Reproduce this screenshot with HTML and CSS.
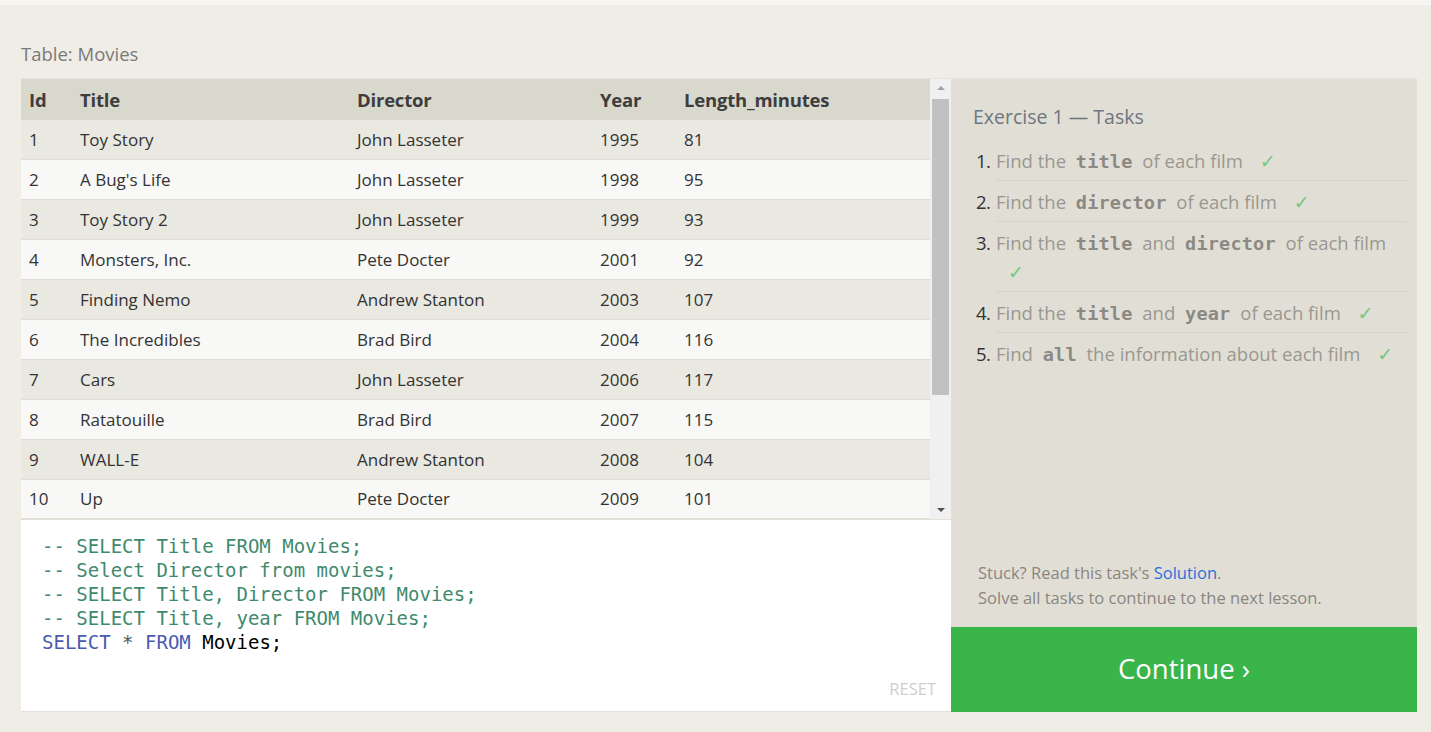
FILE: index.html
```html
<!DOCTYPE html>
<html lang="en">
<head>
<meta charset="utf-8">
<title>SQL Lesson — Movies</title>
<link rel="stylesheet" href="styles.css">
</head>
<body>
<div class="topbar"></div>
<div class="page">
  <div class="caption">Table: Movies</div>
  <div class="workspace">
    <div class="left">
      <div class="results">
        <div class="table-viewport">
          <table class="data">
            <colgroup>
              <col class="c-id"><col class="c-title"><col class="c-dir"><col class="c-year"><col class="c-len">
            </colgroup>
            <thead>
              <tr><th>Id</th><th>Title</th><th>Director</th><th>Year</th><th>Length_minutes</th></tr>
            </thead>
            <tbody>
              <tr><td>1</td><td>Toy Story</td><td>John Lasseter</td><td>1995</td><td>81</td></tr>
              <tr><td>2</td><td>A Bug's Life</td><td>John Lasseter</td><td>1998</td><td>95</td></tr>
              <tr><td>3</td><td>Toy Story 2</td><td>John Lasseter</td><td>1999</td><td>93</td></tr>
              <tr><td>4</td><td>Monsters, Inc.</td><td>Pete Docter</td><td>2001</td><td>92</td></tr>
              <tr><td>5</td><td>Finding Nemo</td><td>Andrew Stanton</td><td>2003</td><td>107</td></tr>
              <tr><td>6</td><td>The Incredibles</td><td>Brad Bird</td><td>2004</td><td>116</td></tr>
              <tr><td>7</td><td>Cars</td><td>John Lasseter</td><td>2006</td><td>117</td></tr>
              <tr><td>8</td><td>Ratatouille</td><td>Brad Bird</td><td>2007</td><td>115</td></tr>
              <tr><td>9</td><td>WALL-E</td><td>Andrew Stanton</td><td>2008</td><td>104</td></tr>
              <tr><td>10</td><td>Up</td><td>Pete Docter</td><td>2009</td><td>101</td></tr>
              <tr><td>11</td><td>Toy Story 3</td><td>Lee Unkrich</td><td>2010</td><td>103</td></tr>
              <tr><td>12</td><td>Cars 2</td><td>John Lasseter</td><td>2011</td><td>120</td></tr>
              <tr><td>13</td><td>Brave</td><td>Brenda Chapman</td><td>2012</td><td>102</td></tr>
              <tr><td>14</td><td>Monsters University</td><td>Dan Scanlon</td><td>2013</td><td>110</td></tr>
            </tbody>
          </table>
        </div>
        <div class="scrollbar">
          <div class="sb-btn"><span class="arrow-up"></span></div>
          <div class="sb-track"><div class="sb-thumb"></div></div>
          <div class="sb-btn sb-btn-bottom"><span class="arrow-down"></span></div>
        </div>
      </div>
      <div class="editor">
        <div class="code">
          <div class="line"><span class="cm">-- SELECT Title FROM Movies;</span></div>
          <div class="line"><span class="cm">-- Select Director from movies;</span></div>
          <div class="line"><span class="cm">-- SELECT Title, Director FROM Movies;</span></div>
          <div class="line"><span class="cm">-- SELECT Title, year FROM Movies;</span></div>
          <div class="line"><span class="kw">SELECT</span> <span class="op">*</span> <span class="kw">FROM</span> Movies;</div>
        </div>
        <div class="reset-row"><span class="reset">RESET</span></div>
      </div>
    </div>
    <div class="right">
      <div class="tasks">
        <h3 class="tasks-title">Exercise 1 — Tasks</h3>
        <ol class="task-list">
          <li><span class="num">1.</span><span class="task">Find the <code>title</code> of each film <span class="check">✓</span></span></li>
          <li><span class="num">2.</span><span class="task">Find the <code>director</code> of each film <span class="check">✓</span></span></li>
          <li><span class="num">3.</span><span class="task">Find the <code>title</code> and <code>director</code> of each film <span class="check">✓</span></span></li>
          <li><span class="num">4.</span><span class="task">Find the <code>title</code> and <code>year</code> of each film <span class="check">✓</span></span></li>
          <li class="last"><span class="num">5.</span><span class="task">Find <code>all</code> the information about each film <span class="check">✓</span></span></li>
        </ol>
      </div>
      <div class="help">
        <p>Stuck? Read this task's <a href="#">Solution</a>.</p>
        <p>Solve all tasks to continue to the next lesson.</p>
      </div>
      <a class="continue" href="#">Continue ›</a>
    </div>
  </div>
</div>
</body>
</html>
```
FILE: styles.css
```css
* { box-sizing: border-box; }

html, body {
  margin: 0;
  padding: 0;
}

body {
  background: #efede6;
  font-family: "Open Sans", "Noto Sans", sans-serif;
  color: #333;
  height: 732px;
  overflow: hidden;
}

.topbar {
  height: 5px;
  background: #f6f5f1;
}

.page {
  padding: 0 14px 0 21px;
}

.caption {
  padding-top: 37px;
  height: 73px;
  font-size: 18.5px;
  line-height: 24px;
  color: #7a7a7a;
}

.workspace {
  display: flex;
  height: 634px;
  border-top: 1px solid #e6e4dc;
}

/* ---------- left column ---------- */
.left {
  width: 930px;
  display: flex;
  flex-direction: column;
  border-bottom: 1px solid #e2e0d7;
}

.results {
  display: flex;
  height: 440px;
}

.table-viewport {
  width: 909px;
  overflow: hidden;
}

.data {
  width: 909px;
  border-collapse: collapse;
  table-layout: fixed;
  font-size: 17px;
}

.c-id { width: 51px; }
.c-title { width: 277px; }
.c-dir { width: 243px; }
.c-year { width: 84px; }
.c-len { width: auto; }

.data th {
  background: #d9d8cd;
  text-align: left;
  font-weight: 700;
  font-size: 18.5px;
  color: #3d3d3d;
  height: 41px;
  padding: 0 8px;
  letter-spacing: -0.2px;
}

.data td {
  height: 39.9px;
  padding: 0 8px;
  color: #333;
  border-bottom: 1px solid #dedcd5;
  white-space: nowrap;
}

.data tbody tr:nth-child(odd) td { background: #e9e8e1; }
.data tbody tr:nth-child(even) td { background: #f8f8f7; }

.scrollbar {
  width: 21px;
  background: #f0f0f0;
  display: flex;
  flex-direction: column;
}

.sb-btn {
  height: 17px;
  display: flex;
  align-items: center;
  justify-content: center;
}

.sb-btn-bottom { height: 19px; }

.arrow-up {
  width: 0;
  height: 0;
  border-left: 4px solid transparent;
  border-right: 4px solid transparent;
  border-bottom: 4px solid #a3a3a3;
}

.arrow-down {
  width: 0;
  height: 0;
  border-left: 4px solid transparent;
  border-right: 4px solid transparent;
  border-top: 4px solid #505050;
}

.sb-track {
  flex: 1;
  padding: 3px 2px 0 2px;
}

.sb-thumb {
  height: 296px;
  background: #c1c1c1;
}

.editor {
  flex: 1;
  background: #fff;
  display: flex;
  flex-direction: column;
  border-top: 1px solid #e3e1d8;
}

.code {
  padding: 14px 0 0 21px;
  font-family: "DejaVu Sans Mono", "Liberation Mono", monospace;
  font-size: 19px;
  line-height: 24px;
  color: #000;
  flex: 1;
}

.line {
  height: 24px;
  white-space: pre;
}

.cm { color: #3f8a6c; }
.kw { color: #4a5bb0; }
.op { color: #555; }

.reset-row {
  display: flex;
  justify-content: flex-end;
  padding: 0 15px 11px 0;
}

.reset {
  font-size: 16.5px;
  line-height: 22px;
  color: #cfcfcf;
}

/* ---------- right column ---------- */
.right {
  width: 466px;
  background: #e1dfd5;
  display: flex;
  flex-direction: column;
}

.tasks {
  flex: 1;
  padding: 25px 10px 0 22px;
}

.tasks-title {
  margin: 0 0 10px 0;
  font-size: 19.5px;
  font-weight: 400;
  line-height: 26px;
  color: #6e7682;
}

.task-list {
  list-style: none;
  margin: 0;
  padding: 0;
}

.task-list li {
  display: flex;
  font-size: 18.5px;
  line-height: 29px;
}

.num {
  width: 23px;
  padding: 6px 0 5px 3px;
  color: #333;
  flex: none;
  letter-spacing: -0.5px;
}

.task {
  flex: 1;
  padding: 6px 0 5px 0;
  color: #9a9791;
  border-bottom: 1px solid #d6d4c9;
}

.task-list li.last .task { border-bottom: none; }

.task code {
  font-family: "DejaVu Sans Mono", "Liberation Mono", monospace;
  font-weight: 700;
  font-size: 18.5px;
  line-height: 1;
  color: #8b8984;
  padding: 0 5px;
  letter-spacing: 0.2px;
}

.check {
  color: #74c77f;
  margin-left: 12px;
  font-family: "DejaVu Sans", sans-serif;
  font-size: 19px;
  line-height: 1;
}

.help {
  padding: 0 10px 17px 27px;
  font-size: 16.5px;
  line-height: 25px;
  color: #8a8580;
}

.help p { margin: 0; }

.help a {
  color: #2a6fdb;
  text-decoration: none;
}

.continue {
  height: 85px;
  background: #3ab54a;
  color: #fff;
  font-size: 27.5px;
  display: flex;
  align-items: center;
  justify-content: center;
  text-decoration: none;
  padding-bottom: 2px;
}
```
